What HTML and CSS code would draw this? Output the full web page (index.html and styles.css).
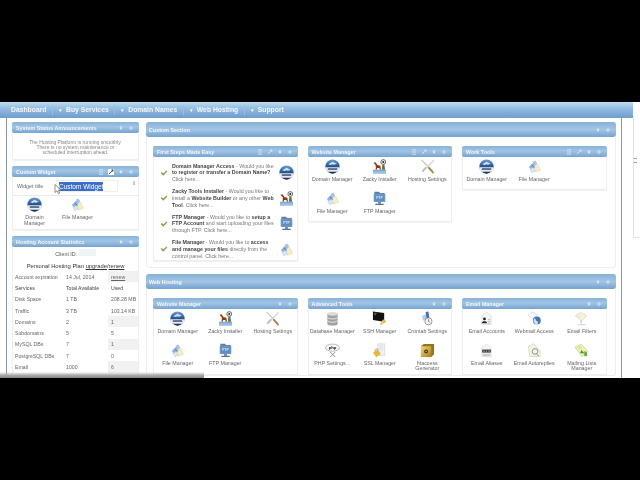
FILE: index.html
```html
<!DOCTYPE html>
<html lang="en">
<head>
<meta charset="utf-8">
<title>Hosting Control Panel</title>
<link rel="stylesheet" href="styles.css">
</head>
<body>
<svg class="defs" width="0" height="0" aria-hidden="true">
  <defs>
    <linearGradient id="gBlue" x1="0" y1="0" x2="0" y2="1"><stop offset="0" stop-color="#6f9fd0"/><stop offset=".55" stop-color="#1f4a8c"/><stop offset="1" stop-color="#12295a"/></linearGradient>
    <linearGradient id="gGold" x1="0" y1="0" x2="1" y2="1"><stop offset="0" stop-color="#f2d878"/><stop offset="1" stop-color="#a87c18"/></linearGradient>
    <symbol id="i-domain" viewBox="0 0 16 16">
      <circle cx="8" cy="8" r="7.6" fill="url(#gBlue)"/>
      <path d="M3.500 5.500 8 3l4.500 2-3 1.200-1.500-.7-2 .9z" fill="#cfe3f5"/>
      <path d="M.5 8.800h15v2.900a7.600 3 0 0 1-15 0z" fill="#e4ebf2"/>
      <path d="M3 10h10v1.400H3z" fill="#27375a"/>
      <path d="M3.200 13.600a7.600 6 0 0 0 9.600 0z" fill="#17315f"/>
    </symbol>
    <symbol id="i-zacky" viewBox="0 0 16 16">
      <path d="M1 11.500h14v4H1z" fill="#6f9fd2"/>
      <path d="M1 13h14M1 14.300h14" stroke="#dfeaf5" stroke-width=".5"/>
      <path d="M1.500 4 3.800 3.500l2 3 3.200.7.500 4.300H8.300L7.800 9.500 5.500 9.700 5 11.500H3.900l.2-4.500L2.500 5z" fill="#8e3e16"/>
      <circle cx="12" cy="3.200" r="2.600" fill="#e9e9e9" stroke="#333" stroke-width=".7"/>
      <circle cx="12" cy="3.200" r="1" fill="#222"/>
      <path d="M11 6h2.200l.8 5.500h-3.600z" fill="#5d7550"/>
    </symbol>
    <symbol id="i-settings" viewBox="0 0 16 16">
      <path d="M1.500 1 13 12.500" stroke="#c4c8cc" stroke-width="1.300"/>
      <path d="M14.500 1.500 6.500 9.500" stroke="#d2d5d9" stroke-width="1.500"/>
      <path d="M6.500 9 2.500 13.500" stroke="#bcc0c5" stroke-width="2.200"/>
      <path d="M9.500 9.500 13.800 14.300" stroke="#a58a55" stroke-width="2.200" stroke-linecap="round"/>
      <circle cx="14" cy="2" r="1.300" fill="#e2e4e7"/>
    </symbol>
    <symbol id="i-file" viewBox="0 0 16 16">
      <path d="M2 8.500 7 3.500l3 2.500-5 6z" fill="#8cb1e0"/>
      <path d="M6 3 9 1.500l2 3.500-3 2z" fill="#a9c6ea"/>
      <path d="M7.500 7.500 11.500 5.500l3 6.500-5.500 2z" fill="#f6edc8" stroke="#d8c690" stroke-width=".4"/>
      <path d="M3 11 6.500 9l2 4-3.500 1.600z" fill="#dfe9f6" stroke="#8fb0d8" stroke-width=".4"/>
      <path d="M5 6.500 8.500 9" stroke="#3f72b8" stroke-width=".8"/>
    </symbol>
    <symbol id="i-ftp" viewBox="0 0 16 16">
      <path d="M2.500 .8h5l1 1.200h5v3h-11z" fill="#5f7f9f"/>
      <rect x="1.800" y="2.800" width="12.400" height="9" rx="1" fill="#7299c4"/>
      <rect x="3" y="4" width="10" height="6.800" fill="#5e8fc4"/>
      <path d="M6.500 11.800h3v1.800h-3z" fill="#66788c"/>
      <path d="M3.500 13.600h9v1.300h-9z" fill="#4f6f8f"/>
      <text x="8" y="9" class="icon-text">FTP</text>
    </symbol>
    <symbol id="i-db" viewBox="0 0 16 16">
      <path d="M2.500 3v10.500a5.500 2 0 0 0 11 0V3z" fill="#a2a2a2"/>
      <ellipse cx="8" cy="3" rx="5.500" ry="2" fill="#dcdcdc"/>
      <path d="M2.500 6.500a5.500 2 0 0 0 11 0M2.500 10a5.500 2 0 0 0 11 0" fill="none" stroke="#ededed" stroke-width=".9"/>
    </symbol>
    <symbol id="i-ssh" viewBox="0 0 16 16">
      <path d="M1 .5 13 2v9.500L1 9.500z" fill="#111"/>
      <path d="M2.200 2.400h3M2.200 3.800h2" stroke="#bbb" stroke-width=".5"/>
      <circle cx="12.500" cy="11" r="2" fill="#e3b93c"/>
      <path d="M11 12.500 9 14.500" stroke="#c99e2a" stroke-width="1.300"/>
    </symbol>
    <symbol id="i-cron" viewBox="0 0 16 16">
      <path d="M6 1 9 .5 10 8 7 9z" fill="#3e6fb8"/>
      <path d="M2 5.500 6 3.500l1 5-3.500 2z" fill="#b2cceb"/>
      <circle cx="9" cy="11" r="3.800" fill="#f6f6f6" stroke="#666" stroke-width=".7"/>
      <path d="M9 8.800V11l1.600 1" fill="none" stroke="#444" stroke-width=".7"/>
    </symbol>
    <symbol id="i-php" viewBox="0 0 16 16">
      <ellipse cx="8" cy="5" rx="7.500" ry="3.800" fill="#f6f6f6" stroke="#777" stroke-width=".5"/>
      <text x="8" y="6.800" class="icon-text icon-text-dark">php</text>
      <path d="M5.500 9.500 11 15M11 9.500 5.500 15" stroke="#8a8a8a" stroke-width="1"/>
    </symbol>
    <symbol id="i-ssl" viewBox="0 0 16 16">
      <path d="M6 .8h7.500v12.500H6z" fill="#eef2f6" stroke="#bfc7cf" stroke-width=".5"/>
      <path d="M7.500 3h4.500M7.500 5h4.500M7.500 7h4.500" stroke="#c3ccd6" stroke-width=".5"/>
      <path d="m1 10.500 5-3.500 3.500 4.500-5 3.800z" fill="#e6b739"/>
      <path d="M2.600 8.800 4.500 6l2.500 1.400" fill="none" stroke="#9a9a9a" stroke-width=".9"/>
    </symbol>
    <symbol id="i-htaccess" viewBox="0 0 16 16">
      <path d="M1 3.500 4 1h11v11l-3 3H1z" fill="#94741c"/>
      <rect x="1" y="3.500" width="11" height="11.500" fill="url(#gGold)"/>
      <circle cx="6.500" cy="9" r="2" fill="#3c2f10"/>
      <circle cx="6.500" cy="9" r=".8" fill="#e6c868"/>
    </symbol>
    <symbol id="i-accounts" viewBox="0 0 16 16">
      <path d="M3 5 8 1l5 4v9.500H3z" fill="#f6f6f6" stroke="#c8c8c8" stroke-width=".5"/>
      <circle cx="5.800" cy="8.400" r="1.500" fill="#222"/>
      <path d="M3 13c0-2.600 5.600-2.600 5.600 0z" fill="#222"/>
      <path d="M9.500 9h2.500M9.500 11h2.500M9.500 13h2.500" stroke="#888" stroke-width=".5"/>
    </symbol>
    <symbol id="i-webmail" viewBox="0 0 16 16">
      <path d="M1 4.500 6 1l6 4-5 4.500z" fill="#f7f9fb" stroke="#a9bcd0" stroke-width=".5"/>
      <circle cx="10.500" cy="10" r="4.200" fill="#3f76b8"/>
      <path d="M8 7.500c1.500 1 1 3 2.500 3.200s1.600 2 .6 3.200c-2 .2-4-1-4.200-3.600z" fill="#d2e2f2"/>
    </symbol>
    <symbol id="i-filters" viewBox="0 0 16 16">
      <path d="M1.500 5 7 1.500 13.500 5 8 10.500z" fill="#f7f5e2" stroke="#c2c29b" stroke-width=".6"/>
      <path d="M7.500 10v3.500" stroke="#a8a8a8" stroke-width=".8"/>
      <path d="M4 14.500h8" stroke="#c4c4c4" stroke-width=".8"/>
      <path d="M4 6l3.500-2M6 7l3.500-2" stroke="#d6d6b4" stroke-width=".5"/>
    </symbol>
    <symbol id="i-aliases" viewBox="0 0 16 16">
      <path d="M3 5 8 1l5 4v9.500H3z" fill="#f6f6f6" stroke="#c8c8c8" stroke-width=".5"/>
      <rect x="3.400" y="7" width="9.200" height="3.200" fill="#333"/>
      <path d="M4.500 8.600h1.500M7.200 8.600h1.500M10 8.600h1.500" stroke="#eee" stroke-width=".9"/>
      <path d="M4 12h8M4 13.400h8" stroke="#888" stroke-width=".5"/>
    </symbol>
    <symbol id="i-autoreply" viewBox="0 0 16 16">
      <path d="M1.500 3.500 7 .8l7 7.400v6.300H3z" fill="#f8f3d8" stroke="#c4ba88" stroke-width=".5"/>
      <circle cx="8.500" cy="9" r="3" fill="#eef2f5" stroke="#5f7a94" stroke-width=".8"/>
      <path d="m10.500 12 2 2" stroke="#5f7a94" stroke-width="1"/>
    </symbol>
    <symbol id="i-lists" viewBox="0 0 16 16">
      <path d="M1 4.500 7.500 1 15 9l-6.500 5.500z" fill="#eef0b0" stroke="#b8b874" stroke-width=".5"/>
      <path d="m8 7.500 3 3.500H6.500z" fill="#4f8a3a"/>
      <path d="M11 8.500v6l3-1v-3z" fill="#63a04a"/>
      <path d="M3.500 5 7 3.200M5 6.500 8.500 4.700" stroke="#bdbd78" stroke-width=".5"/>
    </symbol>
    <symbol id="i-check" viewBox="0 0 10 8">
      <path d="M.5 4 2 2.800 4 4.700 8.300.6 9.500 1.800 4 7.500z" fill="#7ba83c"/>
    </symbol>
    <symbol id="i-brush" viewBox="0 0 7 7">
      <path d="M1 1h5M1 3.500h5M1 6h5" stroke="#dfeaf5" stroke-width="1"/>
    </symbol>
    <symbol id="i-wrench" viewBox="0 0 7 7">
      <path d="M1 6 4.500 2.500M4 1.200 5.800 1 5 2.500l1.400-.4" stroke="#e6eff8" stroke-width="1" fill="none"/>
    </symbol>
    <symbol id="i-wrench-dark" viewBox="0 0 7 7">
      <path d="M1 6 4.500 2.500M4 1.200 5.800 1 5 2.500l1.400-.4" stroke="#222" stroke-width="1" fill="none"/>
    </symbol>
    <symbol id="i-down" viewBox="0 0 7 7">
      <path d="M1.500 3h4L3.500 5.500zM3 1h1v2H3z" fill="#e6eff8"/>
    </symbol>
    <symbol id="i-plus" viewBox="0 0 7 7">
      <path d="M3 1h1v2h2v1H4v2H3V4H1V3h2z" fill="#d6e5f3"/>
    </symbol>
  </defs>
</svg>

<div class="bar-black bar-top"></div>
<div class="screen">
  <nav class="nav">
    <span class="nav-item">Dashboard</span>
    <span class="nav-item nav-arrow">Buy Services</span>
    <span class="nav-item nav-arrow">Domain Names</span>
    <span class="nav-item nav-arrow">Web Hosting</span>
    <span class="nav-item nav-arrow">Support</span>
  </nav>
  <div class="page">
    <div class="frame">
      <aside class="side">
        <section class="widget w-status">
          <header class="head"><span class="title">System Status Announcements</span><span class="tools"><svg class="tool"><use href="#i-down"/></svg><svg class="tool"><use href="#i-plus"/></svg></span></header>
          <p class="status">The Hosting Platform is running smoothly.<br>There is no system maintenance or<br>scheduled interruption ahead.</p>
        </section>
        <section class="widget w-custom">
          <header class="head"><span class="title">Custom Widget</span><span class="tools"><svg class="tool"><use href="#i-brush"/></svg><span class="tool-on"><svg class="tool"><use href="#i-wrench-dark"/></svg></span><svg class="tool"><use href="#i-down"/></svg><svg class="tool"><use href="#i-plus"/></svg></span></header>
          <div class="title-form">
            <span class="lbl">Widget title</span>
            <span class="input"><span class="selected">Custom Widget</span></span>
            <span class="spin">⇕</span>
            <svg class="cursor" viewBox="0 0 8 11"><path d="M1 .5v8l2-1.800 1.300 3 1.400-.6-1.300-2.900h2.600z" fill="#fff" stroke="#666" stroke-width=".7"/></svg>
          </div>
          <div class="icons icons-side">
            <div class="ic"><svg><use href="#i-domain"/></svg><span>Domain<br>Manager</span></div>
            <div class="ic"><svg><use href="#i-file"/></svg><span>File Manager</span></div>
          </div>
        </section>
        <section class="widget w-stats">
          <header class="head"><span class="title">Hosting Account Statistics</span><span class="tools"><svg class="tool"><use href="#i-down"/></svg><svg class="tool"><use href="#i-plus"/></svg></span></header>
          <p class="client">Client ID: <span class="smudge"></span></p>
          <p class="plan">Personal Hosting Plan <u>upgrade</u>/<u>renew</u></p>
          <table class="stats">
            <tr><td>Account expiration</td><td>14 Jul, 2014</td><td class="shade"><u>renew</u></td></tr>
            <tr class="strong"><td>Services</td><td>Total Available</td><td>Used</td></tr>
            <tr><td>Disk Space</td><td>1 TB</td><td>208.28 MB</td></tr>
            <tr><td>Traffic</td><td>3 TB</td><td>103.14 KB</td></tr>
            <tr><td>Domains</td><td>2</td><td class="shade">1</td></tr>
            <tr><td>Subdomains</td><td>5</td><td>5</td></tr>
            <tr><td>MySQL DBs</td><td>7</td><td class="shade">1</td></tr>
            <tr><td>PostgreSQL DBs</td><td>7</td><td>0</td></tr>
            <tr><td>Email</td><td>1000</td><td class="shade">6</td></tr>
          </table>
        </section>
      </aside>

      <main class="main">
        <section class="sect sect-custom">
          <header class="sect-head"><span class="title">Custom Section</span><span class="tools"><svg class="tool"><use href="#i-down"/></svg><svg class="tool"><use href="#i-plus"/></svg></span></header>
          <div class="cols">
            <section class="widget w-steps">
              <header class="head"><span class="title">First Steps Made Easy</span><span class="tools"><svg class="tool"><use href="#i-brush"/></svg><svg class="tool"><use href="#i-wrench"/></svg><svg class="tool"><use href="#i-down"/></svg><svg class="tool"><use href="#i-plus"/></svg></span></header>
              <div class="steps">
                <div class="step"><svg class="check"><use href="#i-check"/></svg><p><b>Domain Manager Access</b> - Would you like<br><b>to register or transfer a Domain Name?</b><br>Click here...</p><svg class="step-ic"><use href="#i-domain"/></svg></div>
                <div class="step"><svg class="check"><use href="#i-check"/></svg><p><b>Zacky Tools Installer</b> - Would you like to<br>install a <b>Website Builder</b> or any other <b>Web</b><br><b>Tool</b>. Click here...</p><svg class="step-ic"><use href="#i-zacky"/></svg></div>
                <div class="step"><svg class="check"><use href="#i-check"/></svg><p><b>FTP Manager</b> - Would you like to <b>setup a</b><br><b>FTP Account</b> and start uploading your files<br>through FTP. Click here...</p><svg class="step-ic"><use href="#i-ftp"/></svg></div>
                <div class="step"><svg class="check"><use href="#i-check"/></svg><p><b>File Manager</b> - Would you like to <b>access</b><br><b>and manage your files</b> directly from the<br>control panel. Click here...</p><svg class="step-ic"><use href="#i-file"/></svg></div>
              </div>
            </section>
            <section class="widget w-site1">
              <header class="head"><span class="title">Website Manager</span><span class="tools"><svg class="tool"><use href="#i-brush"/></svg><svg class="tool"><use href="#i-wrench"/></svg><svg class="tool"><use href="#i-down"/></svg><svg class="tool"><use href="#i-plus"/></svg></span></header>
              <div class="icons">
                <div class="ic"><svg><use href="#i-domain"/></svg><span>Domain Manager</span></div>
                <div class="ic"><svg><use href="#i-zacky"/></svg><span>Zacky Installer</span></div>
                <div class="ic"><svg><use href="#i-settings"/></svg><span>Hosting Settings</span></div>
                <div class="ic"><svg><use href="#i-file"/></svg><span>File Manager</span></div>
                <div class="ic"><svg><use href="#i-ftp"/></svg><span>FTP Manager</span></div>
              </div>
            </section>
            <section class="widget w-work">
              <header class="head"><span class="title">Work Tools</span><span class="tools"><svg class="tool"><use href="#i-brush"/></svg><svg class="tool"><use href="#i-wrench"/></svg><svg class="tool"><use href="#i-down"/></svg><svg class="tool"><use href="#i-plus"/></svg></span></header>
              <div class="icons">
                <div class="ic"><svg><use href="#i-domain"/></svg><span>Domain Manager</span></div>
                <div class="ic"><svg><use href="#i-file"/></svg><span>File Manager</span></div>
              </div>
            </section>
          </div>
        </section>

        <section class="sect">
          <header class="sect-head"><span class="title">Web Hosting</span><span class="tools"><svg class="tool"><use href="#i-down"/></svg><svg class="tool"><use href="#i-plus"/></svg></span></header>
          <div class="cols">
            <section class="widget">
              <header class="head"><span class="title">Website Manager</span><span class="tools"><svg class="tool"><use href="#i-down"/></svg><svg class="tool"><use href="#i-plus"/></svg></span></header>
              <div class="icons">
                <div class="ic"><svg><use href="#i-domain"/></svg><span>Domain Manager</span></div>
                <div class="ic"><svg><use href="#i-zacky"/></svg><span>Zacky Installer</span></div>
                <div class="ic"><svg><use href="#i-settings"/></svg><span>Hosting Settings</span></div>
                <div class="ic"><svg><use href="#i-file"/></svg><span>File Manager</span></div>
                <div class="ic"><svg><use href="#i-ftp"/></svg><span>FTP Manager</span></div>
              </div>
            </section>
            <section class="widget">
              <header class="head"><span class="title">Advanced Tools</span><span class="tools"><svg class="tool"><use href="#i-down"/></svg><svg class="tool"><use href="#i-plus"/></svg></span></header>
              <div class="icons">
                <div class="ic"><svg><use href="#i-db"/></svg><span>Database Manager</span></div>
                <div class="ic"><svg><use href="#i-ssh"/></svg><span>SSH Manager</span></div>
                <div class="ic"><svg><use href="#i-cron"/></svg><span>Crontab Settings</span></div>
                <div class="ic"><svg><use href="#i-php"/></svg><span>PHP Settings...</span></div>
                <div class="ic"><svg><use href="#i-ssl"/></svg><span>SSL Manager</span></div>
                <div class="ic"><svg><use href="#i-htaccess"/></svg><span>htaccess<br>Generator</span></div>
              </div>
            </section>
            <section class="widget">
              <header class="head"><span class="title">Email Manager</span><span class="tools"><svg class="tool"><use href="#i-down"/></svg><svg class="tool"><use href="#i-plus"/></svg></span></header>
              <div class="icons">
                <div class="ic"><svg><use href="#i-accounts"/></svg><span>Email Accounts</span></div>
                <div class="ic"><svg><use href="#i-webmail"/></svg><span>Webmail Access</span></div>
                <div class="ic"><svg><use href="#i-filters"/></svg><span>Email Filters</span></div>
                <div class="ic"><svg><use href="#i-aliases"/></svg><span>Email Aliases</span></div>
                <div class="ic"><svg><use href="#i-autoreply"/></svg><span>Email Autoreplies</span></div>
                <div class="ic"><svg><use href="#i-lists"/></svg><span>Mailing Lists<br>Manager</span></div>
              </div>
            </section>
          </div>
        </section>
      </main>
    </div>
    <div class="gutter"><span class="gutter-mark"></span><span class="gutter-caret"></span></div>
  </div>
  <div class="fade"></div>
</div>
<div class="bar-black bar-bottom"></div>
</body>
</html>
```

FILE: styles.css
```css
* { box-sizing: border-box; }
html, body { margin: 0; height: 480px; overflow: hidden; background: #000; }
body { display: flex; flex-direction: column; font-family: "Liberation Sans", Arial, sans-serif; font-size: 5.3px; color: #666; }
.defs { position: absolute; }
.bar-black { background: #000; flex: none; }
.bar-top { height: 102px; }
.bar-bottom { height: 102px; }
.screen { position: relative; height: 276px; flex: none; overflow: hidden; background: #fff; filter: blur(.45px); }

.nav { height: 16px; display: flex; align-items: center; padding: 0 0 0 5px; background: linear-gradient(#c2dcef 0, #9cc4e4 30%, #7fabd8 70%, #6f9dcc 100%); width: 633px; }
.nav-item { color: #f2f7fb; font-weight: bold; font-size: 6.8px; padding: 0 5.500px 0 6px; border-right: 1px solid #9dc0e0; line-height: 10px; white-space: nowrap; }
.nav-item:last-child { border-right: 0; }
.nav-arrow::before { content: "▾"; display: inline-block; width: 7px; font-size: 5px; }

.page { display: flex; height: 260px; }
.frame { width: 616px; flex: none; margin-left: 6px; border-left: 1px solid #8a9aa8; border-right: 1px solid #8a9aa8; padding: 4px 5px 0 5px; display: flex; gap: 7px; }
.gutter { flex: 1; position: relative; }
.gutter-mark { position: absolute; left: 11px; top: 0; width: 8px; height: 120px; border-left: 1px solid #e2e2e2; border-bottom: 1px solid #e2e2e2; }
.gutter-caret { position: absolute; left: 12px; top: 40px; width: 3px; height: 5px; border: 1px solid #999; border-width: 1px 0; }

.side { width: 127px; flex: none; display: flex; flex-direction: column; gap: 6px; }
.main { width: 470px; flex: none; display: flex; flex-direction: column; gap: 6px; }

.widget { border: 1px solid #eceef0; border-top: 0; border-radius: 2px; background: #fff; box-shadow: 0 1px 1px #eee; }
.head { height: 11px; margin: 0 -1px; display: flex; align-items: center; justify-content: space-between; padding: 0 5px 0 4px; border-radius: 2px; background: linear-gradient(#86b2da, #a3c5e4 45%, #76a3d1); }
.title { font-weight: bold; font-size: 5.300px; color: #f4f8fc; letter-spacing: .05px; white-space: nowrap; }
.tools { display: flex; gap: 4px; align-items: center; }
.tool { width: 6px; height: 6px; display: block; }
.tool-on { background: #fff; display: block; }

.w-status { height: 38px; }
.status { margin: 0; padding: 7px 8px 0; text-align: center; line-height: 5px; font-size: 5px; color: #888; }

.w-custom { height: 64px; }
.title-form { position: relative; height: 19px; display: flex; align-items: center; padding: 0 0 0 4px; border-bottom: 1px solid #eaeaea; }
.lbl { width: 38px; color: #666; }
.input { width: 62px; height: 12px; display: flex; align-items: center; border: 1px solid #eee; padding-left: 2px; margin-left: 1px; }
.selected { background: #3a6ec8; color: #fff; font-size: 6.500px; line-height: 9px; white-space: nowrap; }
.spin { position: absolute; left: 119px; top: 3px; font-size: 5px; color: #888; }
.cursor { position: absolute; left: 41px; top: 7px; width: 8px; height: 11px; }
.icons.icons-side { grid-template-columns: repeat(2, 43px); padding: 1px 0 0 0; }

.w-stats { flex: 1; }
.client { margin: 2px 0 0; text-align: center; font-size: 5.300px; color: #555; line-height: 7px; }
.smudge { display: inline-block; width: 17px; height: 7px; background: #eef3f3; }
.plan { margin: 5px 0 0; text-align: center; color: #333; font-size: 5.800px; line-height: 7px; white-space: nowrap; }
.stats { border-collapse: collapse; width: 125px; margin: 1px 0 0 0; table-layout: fixed; }
.stats td { height: 11.300px; padding: 0 0 0 2px; font-size: 5.200px; color: #666; white-space: nowrap; }
.stats td:nth-child(1) { width: 51px; }
.stats td:nth-child(2) { width: 44px; }
.stats td:nth-child(3) { padding-left: 3px; }
.stats .strong td { color: #444; }
.shade { background: #f1f1f1; }

.sect { border: 1px solid #eceef0; border-top: 0; border-radius: 3px; flex: none; }
.sect-custom { height: 146px; }
.sect-head { height: 15px; margin: 0 -1px; display: flex; align-items: center; justify-content: space-between; padding: 0 5px 0 3px; border-radius: 3px; background: linear-gradient(#86b2da, #a3c5e4 50%, #76a3d1); }
.cols { display: grid; grid-template-columns: repeat(3, 144.500px); column-gap: 10px; padding: 9px 0 0 6px; align-items: start; }

.w-steps { height: 115px; }
.w-site1 { height: 76px; }
.w-work { height: 44px; }
.steps { padding: 3px 3px 0 6px; }
.step { display: flex; align-items: center; gap: 4px; height: 25.500px; }
.check { width: 8px; height: 6px; flex: none; }
.step p { margin: 0; flex: 1; font-size: 5.300px; line-height: 6.800px; color: #777; white-space: nowrap; }
.step b { color: #444; font-weight: bold; }
.step-ic { width: 15px; height: 15px; flex: none; }

.icons { display: grid; grid-template-columns: repeat(3, 47.500px); padding: 2px 0 0 0; }
.ic { height: 31.500px; display: flex; flex-direction: column; align-items: center; text-align: center; }
.ic svg { width: 15px; height: 15px; display: block; flex: none; }
.ic span { margin-top: 3px; font-size: 5.300px; line-height: 5.500px; color: #666; white-space: nowrap; }
.icon-text { font: bold 3.600px "Liberation Sans", sans-serif; fill: #dbe8f5; text-anchor: middle; }
.icon-text-dark { fill: #111; font-size: 4.500px; }

.fade { position: absolute; left: 0; bottom: 0; width: 204px; height: 6px; background: linear-gradient(#fff0, #a8a8a8 55%, #888); }
```
